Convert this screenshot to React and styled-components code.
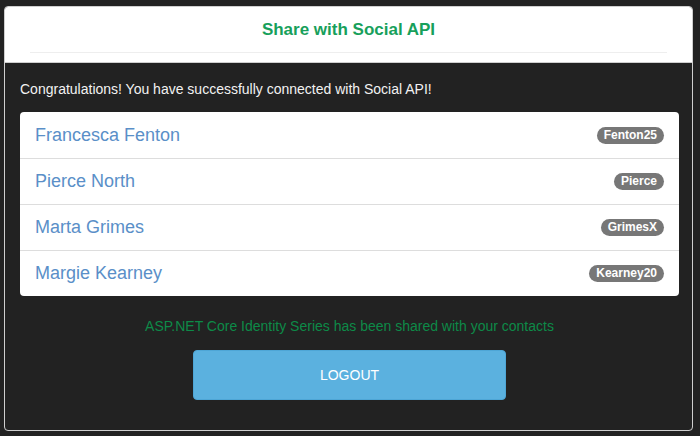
import React from 'react'
import styled, { createGlobalStyle } from 'styled-components'

const GlobalStyle = createGlobalStyle`
  html, body {
    margin: 0;
    padding: 0;
    background: #222222;
    font-family: "Liberation Sans", Arial, sans-serif;
  }
`;

const Page = styled.div`
  padding: 6px 7px 5px 4px;
`;

const Panel = styled.section`
  border: 1px solid #cfcfcf;
  border-radius: 4px;
  overflow: hidden;
  background: #222222;
`;

const PanelHeader = styled.header`
  background: #ffffff;
  height: 56px;
  box-sizing: border-box;
  padding: 13px 25px 0;
  border-bottom: 1px solid #cfcfcf;
`;

const Title = styled.h2`
  margin: 0;
  text-align: center;
  font-size: 17px;
  line-height: 20px;
  font-weight: bold;
  color: #17a05b;
`;

const Rule = styled.hr`
  margin: 12px 0 0;
  border: 0;
  border-top: 1px solid #eeeeee;
`;

const PanelBody = styled.div`
  padding: 16px 13px 30px 15px;
  display: flex;
  flex-direction: column;
  align-items: stretch;
`;

const Intro = styled.p`
  margin: 0 0 13px;
  color: #f2f2f2;
  font-size: 14px;
  line-height: 20px;
`;

const ContactList = styled.ul`
  list-style: none;
  margin: 0;
  padding: 0;
  background: #ffffff;
  border-radius: 4px;
`;

const ContactItem = styled.li`
  height: 46px;
  box-sizing: border-box;
  display: flex;
  align-items: center;
  justify-content: space-between;
  padding: 0 15px;
  border-top: ${p => (p.$first ? 'none' : '1px solid #dddddd')};
`;

const Name = styled.span`
  font-size: 18px;
  color: #5a8fc8;
`;

const Badge = styled.span`
  background: #777777;
  color: #ffffff;
  font-size: 12px;
  font-weight: bold;
  line-height: 17px;
  padding: 0 7px;
  border-radius: 10px;
`;

const SharedNote = styled.p`
  margin: 20px 0 14px;
  text-align: center;
  color: #0d8a48;
  font-size: 14px;
  line-height: 20px;
`;

const LogoutButton = styled.button`
  align-self: center;
  width: 313px;
  height: 50px;
  border: 1px solid #4ea6d6;
  border-radius: 4px;
  background: #5bb1df;
  color: #ffffff;
  font-family: "Liberation Sans", Arial, sans-serif;
  font-size: 14px;
  cursor: pointer;
`;

const contacts = [
  { name: 'Francesca Fenton', handle: 'Fenton25' },
  { name: 'Pierce North', handle: 'Pierce' },
  { name: 'Marta Grimes', handle: 'GrimesX' },
  { name: 'Margie Kearney', handle: 'Kearney20' },
];

const App = () => {
  return (
    <>
      <GlobalStyle />
      <Page>
        <Panel>
          <PanelHeader>
            <Title>Share with Social API</Title>
            <Rule />
          </PanelHeader>
          <PanelBody>
            <Intro>Congratulations! You have successfully connected with Social API!</Intro>
            <ContactList>
              {contacts.map((c, i) => (
                <ContactItem key={c.handle} $first={i === 0}>
                  <Name>{c.name}</Name>
                  <Badge>{c.handle}</Badge>
                </ContactItem>
              ))}
            </ContactList>
            <SharedNote>ASP.NET Core Identity Series has been shared with your contacts</SharedNote>
            <LogoutButton>LOGOUT</LogoutButton>
          </PanelBody>
        </Panel>
      </Page>
    </>
  )
}

export default App
